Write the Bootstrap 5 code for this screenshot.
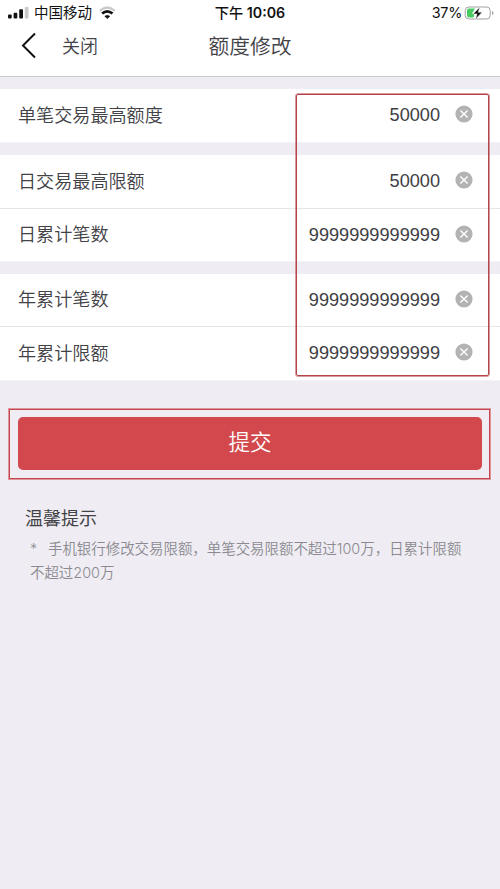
<!DOCTYPE html>
<html lang="zh-CN">
<head>
<meta charset="utf-8">
<meta name="viewport" content="width=device-width, initial-scale=1">
<title>额度修改</title>
<link href="https://cdn.jsdelivr.net/npm/bootstrap@5.3.0/dist/css/bootstrap.min.css" rel="stylesheet">
<style>
body{background:#efedf3;font-family:"Liberation Sans","Noto Sans CJK SC",sans-serif;color:#424247;min-height:889px;overflow:hidden}
svg{display:block;flex:none}
.app-head{height:77px;border-bottom:1px solid #cbcbcd}
.status{height:26px;padding:0 6px 0 8px;color:#111;font-size:14.5px;line-height:26px}
.carrier{margin-left:5px}
.wifi{margin-left:7px}
.battery{margin-left:2px}
.clock{font-family:Inter,"Noto Sans CJK SC",sans-serif;font-weight:600;font-size:14.2px}
.clock span{font-weight:500}
.pct{font-family:Inter,sans-serif;font-size:14.4px;letter-spacing:-.3px}
.title-row{height:40px;line-height:40px;padding-left:21px}
.demi{font-family:"Liberation Sans","Noto Sans CJK SC DemiLight","Noto Sans CJK SC",sans-serif;font-weight:350}
.close-link{font-size:18px;margin-left:25px;padding-top:1px}
.page-title{font-size:20.8px;padding-top:1px}
.groups{padding-top:12px;gap:12px}
.limit{height:53px;padding:0 27px 0 18px;font-size:18.1px;border-bottom:1px solid #e6e5ea}
.limit.tall{height:54px}
.limit:last-child{border-bottom-color:#f3f2f6}
.limit>span{padding-top:2px}
.limit svg{margin-bottom:3px}
.limit>.value{font-size:18.15px;margin-right:15px;padding-top:1px;color:#3e3e43}
.frame{border:1.5px solid #b5434a;outline:.5px solid #b5434a88;border-radius:2px;pointer-events:none}
.frame-values{left:296px;top:94px;width:193px;height:282px}
.submit-wrap{margin:28px 10px 0 9px;padding:7px 7px 7px 8px;border:1.5px solid #c8474f;outline:.5px solid #c8474f88;height:70px}
.submit{background:#d2484c;color:#fff;font-size:21.5px;border-radius:5px;height:53px}
.submit:hover{background:#c63f44;color:#fff}
.tips{padding:26px 24px 0 25px}
.tips h2{font-size:18px;line-height:28px;margin:0}
.tips p{font-family:Inter,"Noto Sans CJK SC DemiLight","Noto Sans CJK SC",sans-serif;font-size:14.45px;line-height:24px;color:#8b8a90;padding-left:5px;margin:4px -4px 0 0;font-weight:350}
.star{display:inline-block;width:18px}
</style>
</head>
<body>
<header class="app-head bg-white">
  <div class="status d-flex align-items-center position-relative">
    <svg width="21" height="14" viewBox="0 0 21 14"><g fill="#111"><rect y="8.5" width="3.7" height="4" rx="1"/><rect x="5.6" y="6.7" width="3.7" height="5.8" rx="1"/><rect x="11.2" y="3.2" width="3.8" height="9.3" rx="1"/></g><rect x="16.8" y="1" width="3.7" height="11.5" rx="1" fill="#c9c9c9"/></svg>
    <span class="carrier">中国移动</span>
    <svg class="wifi" width="17" height="14" viewBox="0 0 17 14" fill="none" stroke-width="2.3"><path d="M.8 4.8Q8.2-1.8 15.8 4.8" stroke="#c9c9c9"/><path d="M3.1 7.6Q8.2 3 13.5 7.6" stroke="#111" stroke-width="2.7"/><path d="M5.9 10.2Q8.3 8.8 10.7 10.2L8.3 12.6Z" fill="#111" stroke="#111" stroke-width=".8"/></svg>
    <div class="clock position-absolute start-50 translate-middle-x text-nowrap"><span>下午</span> 10:06</div>
    <span class="pct ms-auto">37%</span>
    <svg class="battery" width="30" height="16" viewBox="0 0 30 16"><rect x="1.2" y="2" width="25" height="12" rx="3.6" fill="#fff" stroke="#a0a0a0"/><path d="M5 3.6H11L8 8.8H10.4L9.5 12.4H5Q3 12.4 3 10.4V5.6Q3 3.6 5 3.6Z" fill="#46cb60"/><path d="M15.9 2L9 8.9H13L11.5 14.2L18.2 7.2H14.2Z" fill="#111" stroke="#fff" stroke-width=".5"/><path d="M28 6v4Q29.5 9 29.5 8T28 6Z" fill="#999"/></svg>
  </div>
  <nav class="title-row demi d-flex align-items-center position-relative">
    <svg width="16" height="28" viewBox="0 0 16 28" fill="none" stroke="#111" stroke-width="2"><path d="M14 1.5L2 13.5L14 25.5"/></svg>
    <span class="close-link">关闭</span>
    <div class="page-title position-absolute start-50 translate-middle-x text-nowrap">额度修改</div>
  </nav>
</header>
<svg class="d-none"><symbol id="clear" viewBox="0 0 18 18"><circle cx="9" cy="9" r="8.6" fill="#b3b3b3"/><path d="M5.4 5.4l7.2 7.2M12.6 5.4l-7.2 7.2" stroke="#fff" stroke-width="1.4"/></symbol></svg>
<main>
  <div class="groups demi d-flex flex-column">
    <section class="bg-white">
      <div class="limit tall d-flex align-items-center"><span>单笔交易最高额度</span><span class="value ms-auto">50000</span><svg width="18" height="18"><use href="#clear"/></svg></div>
    </section>
    <section class="bg-white">
      <div class="limit tall d-flex align-items-center"><span>日交易最高限额</span><span class="value ms-auto">50000</span><svg width="18" height="18"><use href="#clear"/></svg></div>
      <div class="limit d-flex align-items-center"><span>日累计笔数</span><span class="value ms-auto">9999999999999</span><svg width="18" height="18"><use href="#clear"/></svg></div>
    </section>
    <section class="bg-white">
      <div class="limit d-flex align-items-center"><span>年累计笔数</span><span class="value ms-auto">9999999999999</span><svg width="18" height="18"><use href="#clear"/></svg></div>
      <div class="limit tall d-flex align-items-center"><span>年累计限额</span><span class="value ms-auto">9999999999999</span><svg width="18" height="18"><use href="#clear"/></svg></div>
    </section>
  </div>
  <div class="submit-wrap"><button type="button" class="submit demi btn border-0 w-100 d-flex align-items-center justify-content-center p-0">提交</button></div>
  <section class="tips">
    <h2 class="fw-normal">温馨提示</h2>
    <p><span class="star">*</span>手机银行修改交易限额，单笔交易限额不超过100万，日累计限额<br>不超过200万</p>
  </section>
</main>
<div class="frame frame-values position-absolute"></div>
<script src="https://cdn.jsdelivr.net/npm/bootstrap@5.3.0/dist/js/bootstrap.bundle.min.js"></script>
</body>
</html>
